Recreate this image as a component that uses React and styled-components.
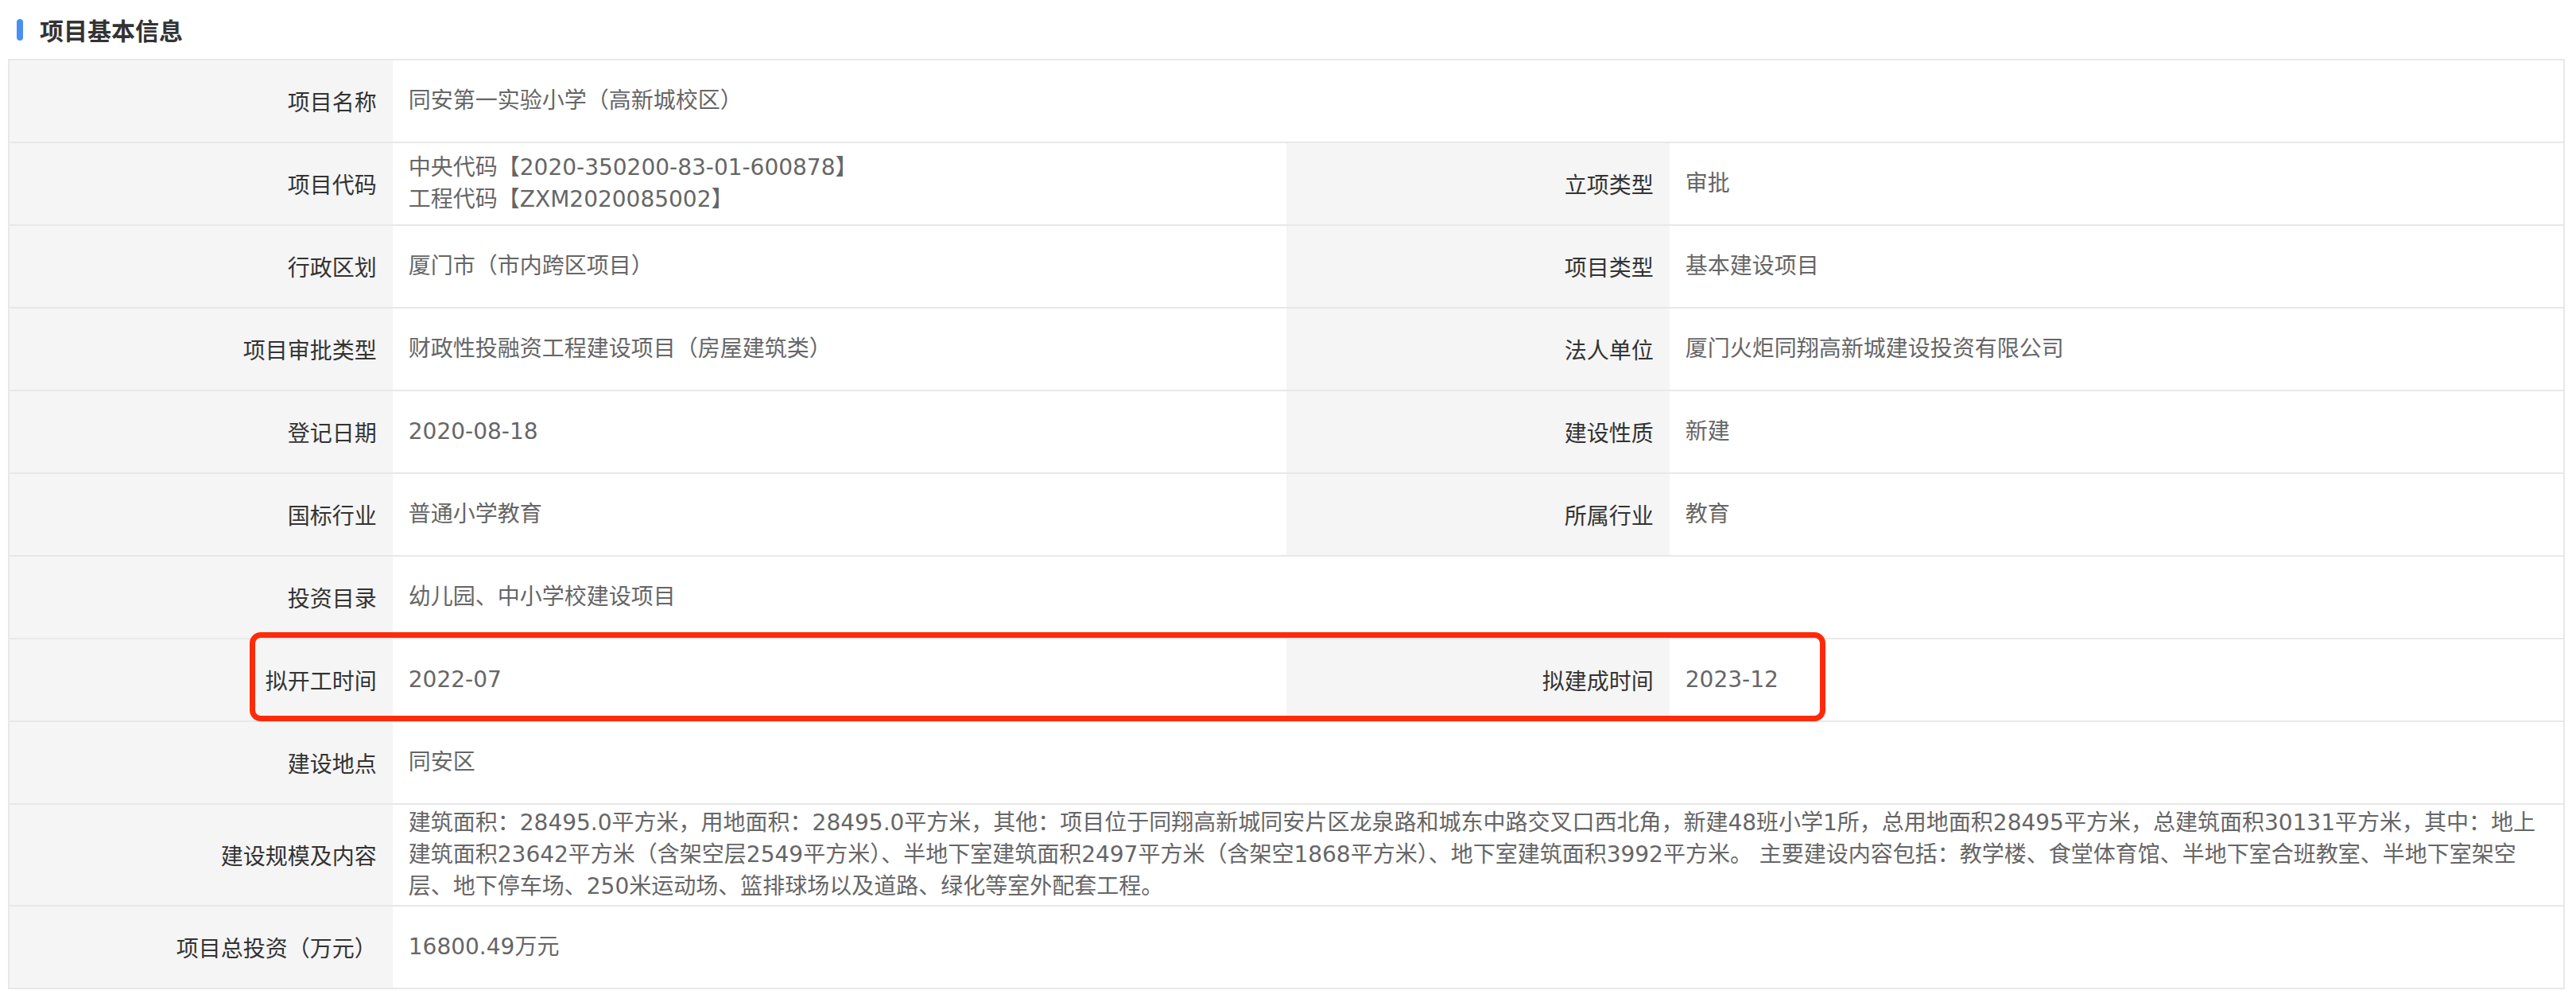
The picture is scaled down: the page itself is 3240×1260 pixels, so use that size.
import React from 'react';
import styled, { createGlobalStyle } from 'styled-components';

const GlobalStyle = createGlobalStyle`
  body {
    margin: 0;
    background: #ffffff;
    font-family: "Noto Sans CJK SC", "Noto Sans", sans-serif;
  }
`

const Page = styled.div`
  padding: 0 14px 0 10px;
`

const Header = styled.div`
  display: flex;
  align-items: center;
  height: 74px;
  padding-left: 11px;
`

const Bar = styled.span`
  width: 8px;
  height: 27px;
  border-radius: 4px;
  background-color: #4a8ff5;
`

const Title = styled.h2`
  margin: 0 0 0 21px;
  font-size: 30px;
  font-weight: 700;
  color: #333333;
`

const Table = styled.div`
  border: 2px solid #e8e8e8;
  border-bottom: none;
`

const Row = styled.div`
  position: relative;
  display: grid;
  grid-template-columns: 15% 35% 15% 35%;
  border-bottom: 2px solid #e8e8e8;
`

const Label = styled.div`
  display: flex;
  align-items: center;
  justify-content: flex-end;
  min-height: 102px;
  padding: 0 20px;
  box-sizing: border-box;
  background-color: #f5f5f5;
  font-size: 28px;
  line-height: 40px;
  color: #333333;
  text-align: right;
`

// latin runs are wider in the original, DejaVu Sans digits match them
const Value = styled.div`
  display: flex;
  flex-direction: column;
  justify-content: center;
  min-height: 102px;
  padding: 3px 20px;
  box-sizing: border-box;
  font-family: "DejaVu Sans", "Noto Sans CJK SC", sans-serif;
  font-size: 28px;
  line-height: 40px;
  color: #666666;
  grid-column: ${props => props.wide ? 'span 3' : 'span 1'};
`

const Highlight = styled.div`
  position: absolute;
  top: -9px;
  left: 302px;
  width: 1982px;
  height: 112px;
  box-sizing: border-box;
  border: 7px solid #ff2a0a;
  border-radius: 14px;
  pointer-events: none;
`

const rows = [
  { label: '项目名称', value: '同安第一实验小学（高新城校区）' },
  {
    label: '项目代码',
    value: ['中央代码【2020-350200-83-01-600878】', '工程代码【ZXM2020085002】'],
    label2: '立项类型',
    value2: '审批'
  },
  { label: '行政区划', value: '厦门市（市内跨区项目）', label2: '项目类型', value2: '基本建设项目' },
  { label: '项目审批类型', value: '财政性投融资工程建设项目（房屋建筑类）', label2: '法人单位', value2: '厦门火炬同翔高新城建设投资有限公司' },
  { label: '登记日期', value: '2020-08-18', label2: '建设性质', value2: '新建' },
  { label: '国标行业', value: '普通小学教育', label2: '所属行业', value2: '教育' },
  { label: '投资目录', value: '幼儿园、中小学校建设项目' },
  { label: '拟开工时间', value: '2022-07', label2: '拟建成时间', value2: '2023-12', marked: true },
  { label: '建设地点', value: '同安区' },
  {
    label: '建设规模及内容',
    value: '建筑面积：28495.0平方米，用地面积：28495.0平方米，其他：项目位于同翔高新城同安片区龙泉路和城东中路交叉口西北角，新建48班小学1所，总用地面积28495平方米，总建筑面积30131平方米，其中：地上建筑面积23642平方米（含架空层2549平方米）、半地下室建筑面积2497平方米（含架空1868平方米）、地下室建筑面积3992平方米。 主要建设内容包括：教学楼、食堂体育馆、半地下室合班教室、半地下室架空层、地下停车场、250米运动场、篮排球场以及道路、绿化等室外配套工程。'
  },
  { label: '项目总投资（万元）', value: '16800.49万元' }
]

const renderValue = (value) => (
  Array.isArray(value) ? value.map(line => <div key={line}>{line}</div>) : value
)

export default function App() {
  return (
    <Page>
      <GlobalStyle />
      <Header>
        <Bar />
        <Title>项目基本信息</Title>
      </Header>
      <Table>
        {rows.map(row => (
          <Row key={row.label}>
            <Label>{row.label}</Label>
            <Value wide={!row.label2}>{renderValue(row.value)}</Value>
            {row.label2 ? <Label>{row.label2}</Label> : null}
            {row.label2 ? <Value>{row.value2}</Value> : null}
            {row.marked ? <Highlight /> : null}
          </Row>
        ))}
      </Table>
    </Page>
  );
}
